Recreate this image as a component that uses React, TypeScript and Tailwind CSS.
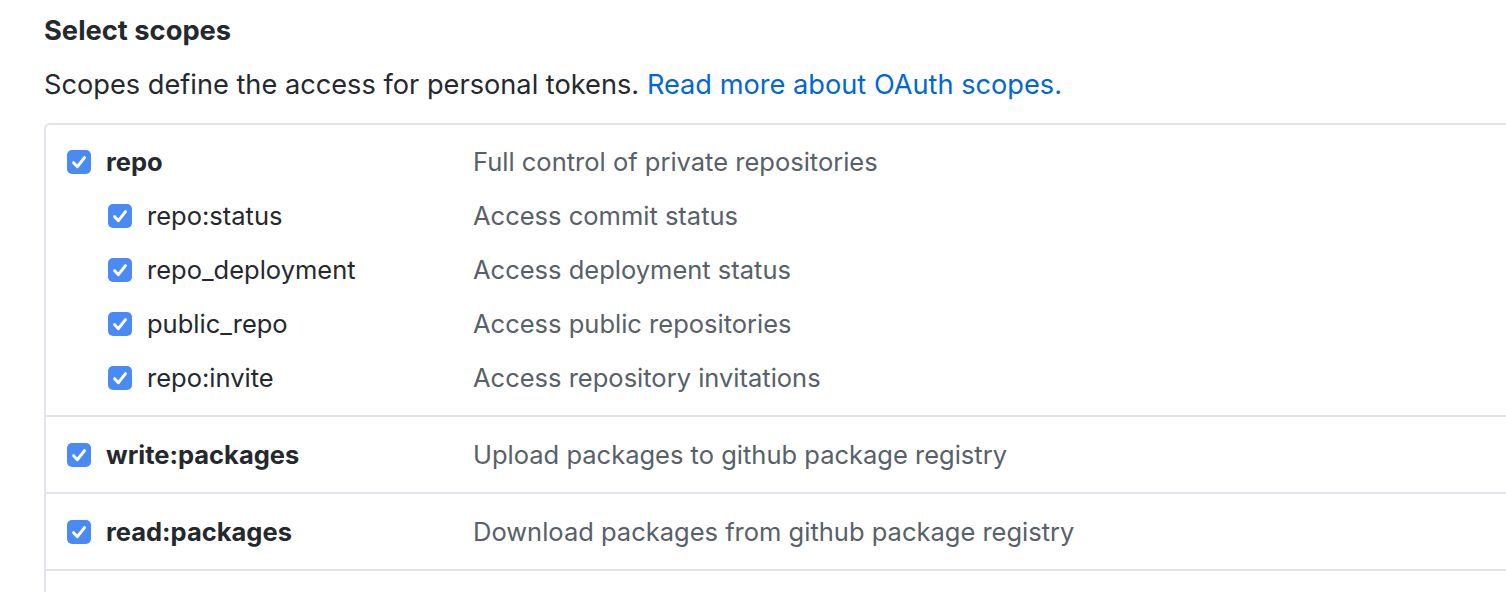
import React from "react";

type Scope = { name: string; desc: string; sub?: { name: string; desc: string }[] };

const SCOPES: Scope[] = [
  {
    name: "repo",
    desc: "Full control of private repositories",
    sub: [
      { name: "repo:status", desc: "Access commit status" },
      { name: "repo_deployment", desc: "Access deployment status" },
      { name: "public_repo", desc: "Access public repositories" },
      { name: "repo:invite", desc: "Access repository invitations" },
    ],
  },
  { name: "write:packages", desc: "Upload packages to github package registry" },
  { name: "read:packages", desc: "Download packages from github package registry" },
];

function Check() {
  return (
    <span className="grid size-6 shrink-0 place-items-center rounded-[5px] bg-[#4a8af4]">
      <svg viewBox="0 0 24 24" className="size-6" fill="none">
        <path d="M6.6 12.7l3.8 4L17.5 7.6" stroke="white" strokeWidth="3" strokeLinecap="round" strokeLinejoin="round" />
      </svg>
    </span>
  );
}

function Row({ name, desc, top, indent }: { name: string; desc: string; top?: boolean; indent?: boolean }) {
  return (
    <div className="flex h-[54px] items-center">
      <div className={`flex w-[406px] items-center gap-[15px] ${indent ? "pl-[41px]" : ""}`}>
        <Check />
        <span className={top ? "font-bold text-[#24292e]" : "text-[#24292e]"}>{name}</span>
      </div>
      <span className="text-[#586069]">{desc}</span>
    </div>
  );
}

export default function App() {
  return (
    <div className="min-h-screen bg-white pl-[44px] font-['Inter',sans-serif]">
      <h3 className="pt-[13px] text-[27.3px] font-bold leading-9 text-[#24292e]">Select scopes</h3>
      <p className="mt-[18px] text-[27.2px] leading-9 text-[#24292e]">
        Scopes define the access for personal tokens.{" "}
        <a className="text-[#0366d6]">Read more about OAuth scopes.</a>
      </p>
      <div className="mt-[20px] -mr-4 rounded-tl-[6px] border-l-2 border-t-2 border-[#e1e4e8] text-[25.5px]">
        {SCOPES.map((s, i) => (
          <div
            key={s.name}
            className={`pl-[21px] ${i > 0 ? "border-t-2 border-[#e1e4e8] pt-[11px] pb-[10px]" : "pt-[10px] pb-[10px]"}`}
          >
            <Row name={s.name} desc={s.desc} top />
            {s.sub?.map((c) => (
              <Row key={c.name} name={c.name} desc={c.desc} indent />
            ))}
          </div>
        ))}
        <div className="h-[40px] border-t-2 border-[#e1e4e8]" />
      </div>
    </div>
  );
}
